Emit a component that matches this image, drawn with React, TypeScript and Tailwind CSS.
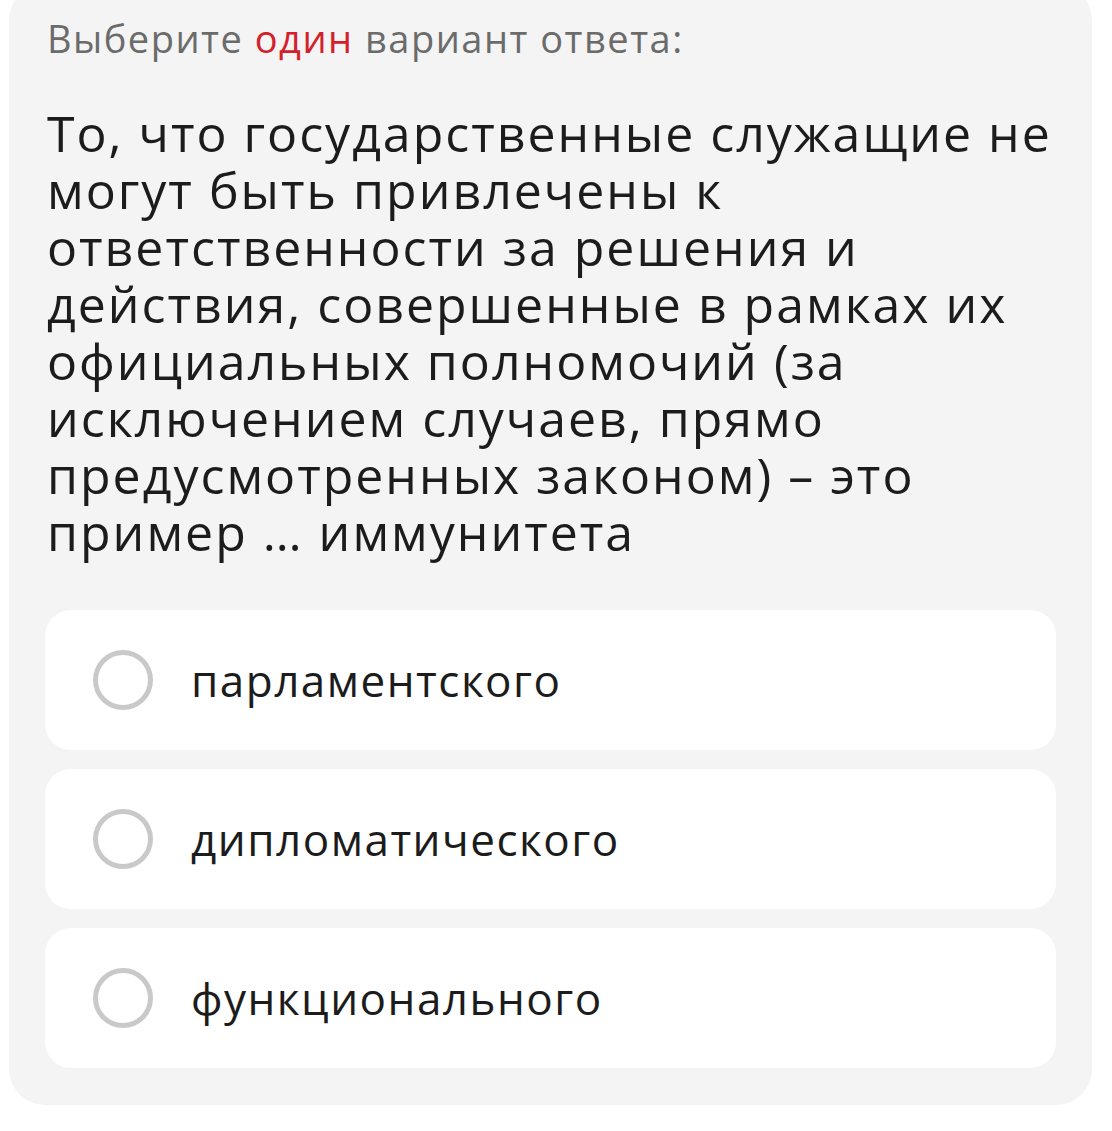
import React from 'react';

const options = ['парламентского', 'дипломатического', 'функционального'];

const questionLines = [
    'То, что государственные служащие не',
    'могут быть привлечены к',
    'ответственности за решения и',
    'действия, совершенные в рамках их',
    'официальных полномочий (за',
    'исключением случаев, прямо',
    'предусмотренных законом) – это',
    'пример … иммунитета',
];

const App: React.FC = () => {
    return (
        <div className="min-h-[1131px] bg-white px-[9px] pr-[20px]" style={{ fontFamily: '"Open Sans", "Noto Sans", sans-serif' }}>
            <div className="-mt-[16px] rounded-[36px] bg-[#f4f4f4] px-9 pt-[26px] pb-[37px]">
                <p className="pl-[2px] text-[38px] leading-[56px] tracking-[1.5px] text-[#6b6b6b]">
                    Выберите <span className="text-[#d3212c]">один</span> вариант ответа:
                </p>
                <h2 className="mt-[39px] pl-[2px] whitespace-nowrap text-[50px] leading-[57px] tracking-[2px] text-[#1c1c1c]">
                    {questionLines.map((line, i) => (
                        <React.Fragment key={i}>
                            {i > 0 && <br />}
                            {line}
                        </React.Fragment>
                    ))}
                </h2>
                <div className="mt-[49px] flex flex-col gap-[19px]">
                    {options.map(opt => (
                        <label key={opt} className="flex h-[140px] items-center rounded-[26px] bg-white pl-[48px]">
                            <span className="h-[60px] w-[60px] shrink-0 rounded-full border-[5px] border-[#c9c9c9]" />
                            <span className="ml-[38px] text-[44px] tracking-[1.5px] text-[#1c1c1c]">{opt}</span>
                        </label>
                    ))}
                </div>
            </div>
        </div>
    );
};

export default App;
